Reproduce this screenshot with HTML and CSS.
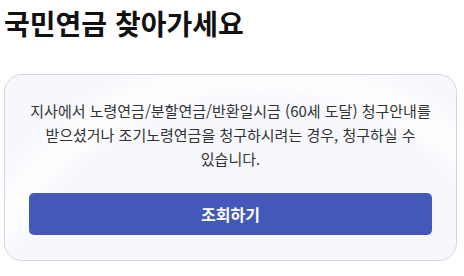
FILE: index.html
```html
<!DOCTYPE html>
<html lang="ko">
<head>
<meta charset="utf-8">
<link rel="stylesheet" href="styles.css">
</head>
<body>
<main class="page">
  <h1 class="title">국민연금 찾아가세요</h1>
  <section class="card">
    <p class="desc">지사에서 노령연금/분할연금/반환일시금 (60세 도달) 청구안내를 받으셨거나 조기노령연금을 청구하시려는 경우, 청구하실 수 있습니다.</p>
    <button class="btn" type="button">조회하기</button>
  </section>
</main>
</body>
</html>
```
FILE: styles.css
```css
html, body {
  margin: 0;
  padding: 0;
  background: #ffffff;
}
.page {
  width: 464px;
  height: 276px;
  box-sizing: border-box;
  padding: 4px 7px 0 4px;
  font-family: "Noto Sans CJK KR", "Noto Sans", sans-serif;
  display: flex;
  flex-direction: column;
}
.title {
  margin: 0;
  font-size: 28px;
  font-weight: 700;
  line-height: 38px;
  color: #111111;
}
.card {
  margin-top: 32px;
  height: 187px;
  box-sizing: border-box;
  border: 1px solid #d3d5ea;
  border-radius: 18px;
  background-color: #f7f8fc;
  background-image: radial-gradient(circle at 256px 300px, rgba(255,255,255,0) 0, rgba(255,255,255,0) 275px, rgba(255,255,255,0.85) 292px, rgba(255,255,255,0.85) 305px, rgba(255,255,255,0) 330px);
  padding: 24px 24px 0 24px;
  display: flex;
  flex-direction: column;
  align-items: center;
}
.desc {
  margin: 0;
  font-size: 15px;
  line-height: 24px;
  color: #333333;
  text-align: center;
  word-break: keep-all;
}
.btn {
  margin-top: 22px;
  width: 403px;
  height: 42px;
  flex-shrink: 0;
  border: none;
  border-radius: 5px;
  background: #4259b9;
  color: #ffffff;
  font-family: "Noto Sans CJK KR", sans-serif;
  font-size: 16px;
  font-weight: 700;
  cursor: pointer;
}
```
